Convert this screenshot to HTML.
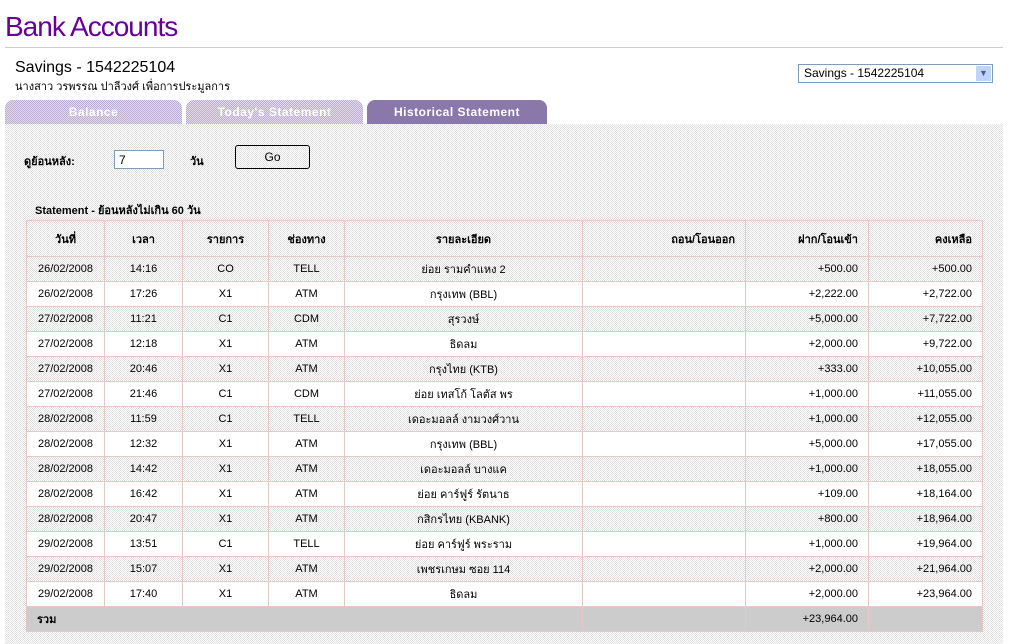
<!DOCTYPE html>
<html><head><meta charset="utf-8"><style>
body{margin:0;width:1011px;height:644px;background:#fff;font-family:"Liberation Sans","Noto Sans CJK SC",sans-serif;position:relative;overflow:hidden}
.dot{background:repeating-conic-gradient(#e0e0e0 0 25%,#fff 0 50%) 0 0/2px 2px}
h1{position:absolute;left:5px;top:11px;margin:0;font-weight:normal;font-size:28px;color:#660099;letter-spacing:-1px}
.hr{position:absolute;left:5px;top:47px;width:998px;height:1px;background:#ccc}
.acct{position:absolute;left:15px;top:59px;font-size:16px;color:#000}
.name{position:absolute;left:15px;top:77px;font-size:11px}
.sel{position:absolute;left:798px;top:64px;border:1px solid #7f9db9;font-size:12px;line-height:17px;padding-left:5px;box-sizing:border-box;width:195px;height:19px}
.sel b{position:absolute;right:1px;top:1px;width:15px;height:15px;background:#c1d3fb;font-size:9px;text-align:center;line-height:15px;color:#4d6185}
.tab{position:absolute;top:100px;height:24px;border-radius:8px 8px 0 0;color:#fff;font-weight:bold;font-size:12px;text-align:center;line-height:24px;letter-spacing:.5px}
.t1{background:repeating-conic-gradient(#bcaed0 0 25%,#e2daec 0 50%) 0 0/2px 2px}
.t2{background:#8a78aa}
.content{position:absolute;left:5px;top:124px;width:998px;height:520px}
.lbl{position:absolute;font-size:11px;font-weight:bold}
.inp{position:absolute;left:114px;top:150px;width:50px;height:19px;border:1px solid #7f9db9;background:#fff;font-size:12px;line-height:19px;padding-left:4px;box-sizing:border-box}
.go{position:absolute;left:235px;top:145px;width:75px;height:24px;border:1px solid #000;border-radius:3px;box-sizing:border-box;font-size:12px;text-align:center;line-height:22px}
table{position:absolute;left:26px;top:220px;border-collapse:collapse;font-size:11px}
td{border:1px solid #e6c8c8;padding:0 10px;height:24px}
tr.h td{height:35px;font-weight:bold;text-align:center}
td.c{text-align:center}td.r{text-align:right}
tr.w td{background:#fff}
tr.s td{background:#ccc;font-weight:bold}
</style></head><body>
<h1>Bank Accounts</h1><div class="hr"></div>
<div class="acct">Savings - 1542225104</div>
<div class="name">นางสาว วรพรรณ ปาลีวงศ์ เพื่อการประมูลการ</div>
<div class="sel">Savings - 1542225104<b>▼</b></div>
<div class="tab t1" style="left:5px;width:177px">Balance</div>
<div class="tab t1" style="left:186px;width:177px">Today's Statement</div>
<div class="tab t2" style="left:367px;width:180px">Historical Statement</div>
<div class="content dot"></div>
<div class="lbl" style="left:24px;top:152px">ดูย้อนหลัง:</div>
<div class="inp">7</div>
<div class="lbl" style="left:190px;top:152px">วัน</div>
<div class="go">Go</div>
<div class="lbl" style="left:35px;top:201px">Statement - ย้อนหลังไม่เกิน 60 วัน</div>
<table>
<colgroup><col style="width:78px"><col style="width:78px"><col style="width:86px"><col style="width:76px"><col style="width:238px"><col style="width:163px"><col style="width:123px"><col style="width:114px"></colgroup>
<tr class="h"><td>วันที่</td><td>เวลา</td><td>รายการ</td><td>ช่องทาง</td><td>รายละเอียด</td><td style="text-align:right">ถอน/โอนออก</td><td style="text-align:right">ฝาก/โอนเข้า</td><td style="text-align:right">คงเหลือ</td></tr>
<tr><td class="c">26/02/2008</td><td class="c">14:16</td><td class="c">CO</td><td class="c">TELL</td><td class="c">ย่อย รามคำแหง 2</td><td></td><td class="r">+500.00</td><td class="r">+500.00</td></tr>
<tr class="w"><td class="c">26/02/2008</td><td class="c">17:26</td><td class="c">X1</td><td class="c">ATM</td><td class="c">กรุงเทพ (BBL)</td><td></td><td class="r">+2,222.00</td><td class="r">+2,722.00</td></tr>
<tr><td class="c">27/02/2008</td><td class="c">11:21</td><td class="c">C1</td><td class="c">CDM</td><td class="c">สุรวงษ์</td><td></td><td class="r">+5,000.00</td><td class="r">+7,722.00</td></tr>
<tr class="w"><td class="c">27/02/2008</td><td class="c">12:18</td><td class="c">X1</td><td class="c">ATM</td><td class="c">ธิดลม</td><td></td><td class="r">+2,000.00</td><td class="r">+9,722.00</td></tr>
<tr><td class="c">27/02/2008</td><td class="c">20:46</td><td class="c">X1</td><td class="c">ATM</td><td class="c">กรุงไทย (KTB)</td><td></td><td class="r">+333.00</td><td class="r">+10,055.00</td></tr>
<tr class="w"><td class="c">27/02/2008</td><td class="c">21:46</td><td class="c">C1</td><td class="c">CDM</td><td class="c">ย่อย เทสโก้ โลตัส พร</td><td></td><td class="r">+1,000.00</td><td class="r">+11,055.00</td></tr>
<tr><td class="c">28/02/2008</td><td class="c">11:59</td><td class="c">C1</td><td class="c">TELL</td><td class="c">เดอะมอลล์ งามวงศ์วาน</td><td></td><td class="r">+1,000.00</td><td class="r">+12,055.00</td></tr>
<tr class="w"><td class="c">28/02/2008</td><td class="c">12:32</td><td class="c">X1</td><td class="c">ATM</td><td class="c">กรุงเทพ (BBL)</td><td></td><td class="r">+5,000.00</td><td class="r">+17,055.00</td></tr>
<tr><td class="c">28/02/2008</td><td class="c">14:42</td><td class="c">X1</td><td class="c">ATM</td><td class="c">เดอะมอลล์ บางแค</td><td></td><td class="r">+1,000.00</td><td class="r">+18,055.00</td></tr>
<tr class="w"><td class="c">28/02/2008</td><td class="c">16:42</td><td class="c">X1</td><td class="c">ATM</td><td class="c">ย่อย คาร์ฟูร์ รัตนาธ</td><td></td><td class="r">+109.00</td><td class="r">+18,164.00</td></tr>
<tr><td class="c">28/02/2008</td><td class="c">20:47</td><td class="c">X1</td><td class="c">ATM</td><td class="c">กสิกรไทย (KBANK)</td><td></td><td class="r">+800.00</td><td class="r">+18,964.00</td></tr>
<tr class="w"><td class="c">29/02/2008</td><td class="c">13:51</td><td class="c">C1</td><td class="c">TELL</td><td class="c">ย่อย คาร์ฟูร์ พระราม</td><td></td><td class="r">+1,000.00</td><td class="r">+19,964.00</td></tr>
<tr><td class="c">29/02/2008</td><td class="c">15:07</td><td class="c">X1</td><td class="c">ATM</td><td class="c">เพชรเกษม ซอย 114</td><td></td><td class="r">+2,000.00</td><td class="r">+21,964.00</td></tr>
<tr class="w"><td class="c">29/02/2008</td><td class="c">17:40</td><td class="c">X1</td><td class="c">ATM</td><td class="c">ธิดลม</td><td></td><td class="r">+2,000.00</td><td class="r">+23,964.00</td></tr>
<tr class="s"><td colspan="5">รวม</td><td></td><td class="r" style="font-weight:normal">+23,964.00</td><td></td></tr>
</table>
</body></html>
